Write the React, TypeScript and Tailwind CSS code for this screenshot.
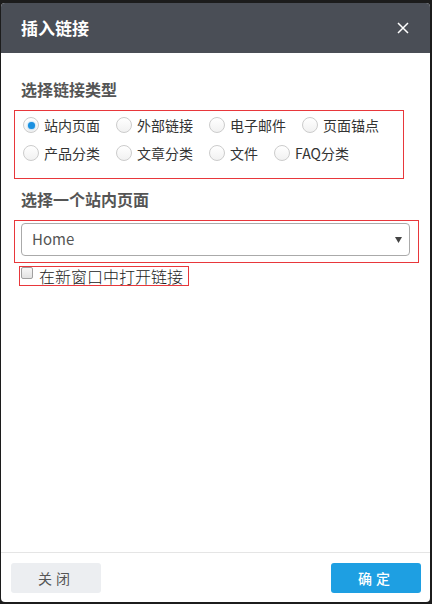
import * as React from 'react';

const font = { fontFamily: '"Noto Sans CJK SC", "Noto Sans", sans-serif' };

const typesRow1 = ['站内页面', '外部链接', '电子邮件', '页面锚点'];
const typesRow2 = ['产品分类', '文章分类', '文件', 'FAQ分类'];

function Radio({ label, checked }: { label: string; checked?: boolean }) {
    return (
        <label className="flex items-center gap-[5px] text-[14px] leading-[20px] text-[#333]">
            <span className="flex h-[16px] w-[16px] items-center justify-center rounded-full border border-[#cccccc] bg-gradient-to-b from-white to-[#f1f1f1]">
                {checked && <span className="h-[7px] w-[7px] rounded-full bg-[#1a90e0] shadow-[0_0_2px_#5ab4f0]" />}
            </span>
            <span>{label}</span>
        </label>
    );
}

export default function App() {
    return (
        <div className="flex h-[604px] w-[432px] bg-[#1c1c1c] pb-[2px] pl-[1px] pr-[2px] pt-[3px]" style={font}>
            <div className="flex flex-1 flex-col overflow-hidden rounded-[4px] bg-white">
                <div className="flex h-[50px] items-center justify-between bg-[#4a4e56] pl-[20px] pr-[21px]">
                    <span className="text-[17px] font-bold text-white">插入链接</span>
                    <svg width="12" height="12" viewBox="0 0 12 12" className="text-white">
                        <path d="M1 1 L11 11 M11 1 L1 11" stroke="currentColor" strokeWidth="1.5" />
                    </svg>
                </div>

                <div className="flex flex-col">
                    <h3 className="ml-[20px] mt-[25px] text-[16px] font-bold leading-[22px] text-[#555]">选择链接类型</h3>
                    <div className="ml-[13px] mt-[10px] w-[390px] border border-[#e8373b] pb-[11px] pl-[8px]">
                        <div className="flex h-[28px] items-center gap-x-[16px]">
                            {typesRow1.map((t, i) => (
                                <Radio key={t} label={t} checked={i === 0} />
                            ))}
                        </div>
                        <div className="flex h-[28px] items-center gap-x-[16px]">
                            {typesRow2.map((t) => (
                                <Radio key={t} label={t} />
                            ))}
                        </div>
                    </div>

                    <h3 className="ml-[20px] mt-[9px] text-[16px] font-bold leading-[22px] text-[#555]">选择一个站内页面</h3>
                    <div className="ml-[13px] mt-[10px] w-[405px] border border-[#e8373b] pb-[6px] pl-[6px] pr-[8px] pt-[2px]">
                        <div className="flex h-[33px] items-center justify-between rounded-[4px] border border-[#aaa] pl-[10px] pr-[7px]">
                            <span className="text-[15px] text-[#555]">Home</span>
                            <svg width="7" height="6" viewBox="0 0 7 6">
                                <path d="M0 0 H7 L3.5 6 Z" fill="#444" />
                            </svg>
                        </div>
                    </div>

                    <div className="ml-[18px] mt-[3px] flex h-[20px] w-[170px] items-center gap-[6px] border border-[#e8373b]">
                        <span className="-mt-[6px] ml-[1px] h-[12px] w-[12px] rounded-[2px] border border-[#a0a0a0] bg-gradient-to-b from-[#f7f7f7] to-[#e2e2e2]" />
                        <span className="text-[16px] font-light leading-[18px] text-[#222]">在新窗口中打开链接</span>
                    </div>
                </div>

                <div className="mt-auto flex items-center justify-between border-t border-[#e5e5e5] pb-[9px] pl-[10px] pr-[9px] pt-[10px]">
                    <button className="h-[30px] w-[90px] rounded-[3px] bg-[#eceef1] text-[14px] tracking-[4px] text-[#555]">关闭</button>
                    <button className="h-[30px] w-[90px] rounded-[3px] bg-[#1e9fe2] text-[14px] font-medium tracking-[4px] text-white">确定</button>
                </div>
            </div>
        </div>
    );
}
